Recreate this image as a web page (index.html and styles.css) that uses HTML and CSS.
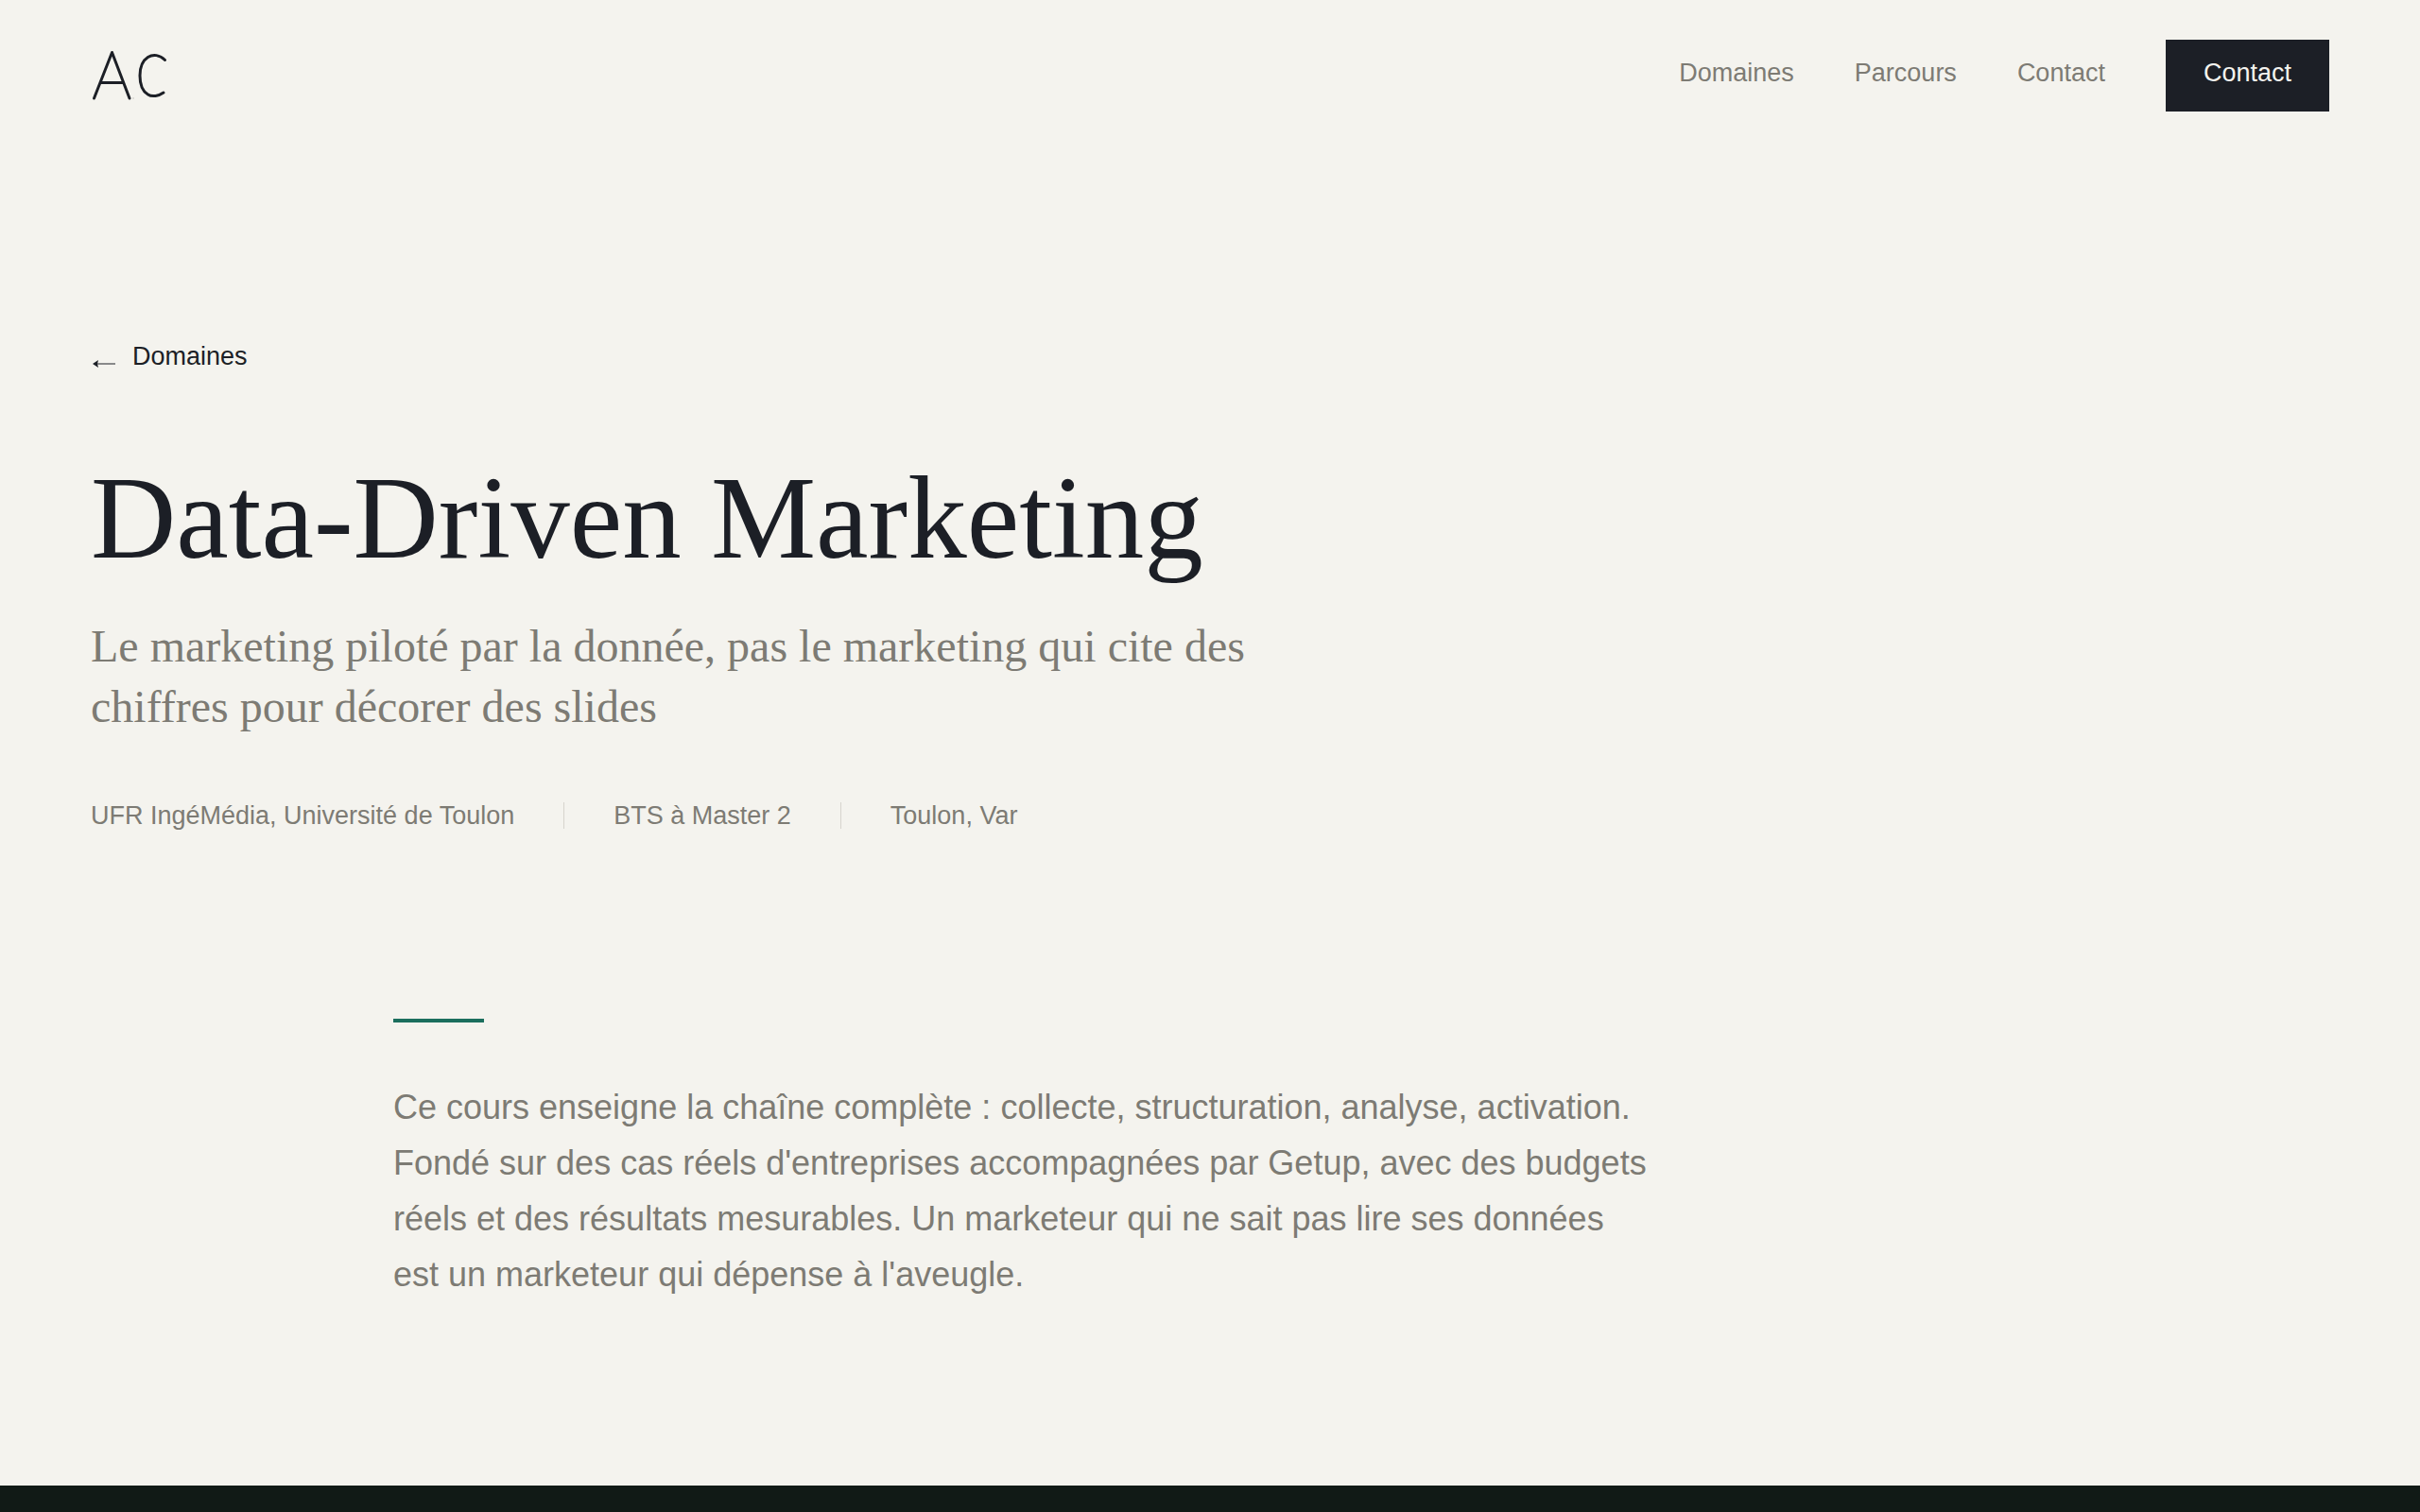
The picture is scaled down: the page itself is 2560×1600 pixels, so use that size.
FILE: index.html
```html
<!DOCTYPE html>
<html lang="fr">
<head>
<meta charset="utf-8">
<meta name="viewport" content="width=device-width, initial-scale=1">
<title>Data-Driven Marketing</title>
<link rel="stylesheet" href="styles.css">
</head>
<body>
<header class="site-header">
  <a class="logo" href="#" aria-label="AC">
    <svg width="84" height="60" viewBox="0 0 84 60" aria-hidden="true">
      <path d="M3.500 54 22.500 5.500 41 54M10.500 37.500H34"/>
      <path d="M78.500 13.500C73 8 66 7 60.500 10.500 53.500 15 52 22 52 30 52 39 54.500 46.500 60.500 50 65 53 72 51.500 77 48"/>
      <circle cx="45" cy="54" r="1"/>
    </svg>
  </a>
  <nav class="nav">
    <a class="nav-link" href="#domaines">Domaines</a>
    <a class="nav-link" href="#parcours">Parcours</a>
    <a class="nav-link" href="#contact">Contact</a>
    <a class="nav-button" href="#contact">Contact</a>
  </nav>
</header>
<main>
  <section class="hero">
    <a class="back" href="#domaines">
      <svg width="28" height="10" viewBox="0 0 28 10" aria-hidden="true">
        <path class="shaft" d="M5 5H26"/>
        <path class="head" d="M2 5 8 1 7 5 8 9Z"/>
      </svg>
      <span>Domaines</span>
    </a>
    <h1 class="title">Data-Driven Marketing</h1>
    <p class="subtitle">Le marketing piloté par la donnée, pas le marketing qui cite des chiffres pour décorer des slides</p>
    <ul class="meta">
      <li>UFR IngéMédia, Université de Toulon</li>
      <li>BTS à Master 2</li>
      <li>Toulon, Var</li>
    </ul>
  </section>
  <section class="intro">
    <p class="intro-text">Ce cours enseigne la chaîne complète : collecte, structuration, analyse, activation. Fondé sur des cas réels d'entreprises accompagnées par Getup, avec des budgets réels et des résultats mesurables. Un marketeur qui ne sait pas lire ses données est un marketeur qui dépense à l'aveugle.</p>
  </section>
  <section class="dark-band"></section>
</main>
</body>
</html>
```
FILE: styles.css
```css
* {
  box-sizing: border-box;
}

body {
  margin: 0;
  min-height: 100vh;
  display: flex;
  flex-direction: column;
  background: #f4f3ee;
  color: #1c1f26;
  font-family: "Liberation Sans", Arial, sans-serif;
  font-size: 27px;
  line-height: 40px;
}

a {
  color: inherit;
  text-decoration: none;
}

main {
  flex: 1;
  display: flex;
  flex-direction: column;
}

.site-header {
  display: flex;
  justify-content: space-between;
  align-items: center;
  padding: 42px 96px;
}

.logo svg {
  display: block;
  fill: none;
  stroke: #1c1f26;
  stroke-width: 3;
  stroke-linecap: round;
  stroke-linejoin: round;
}

.logo circle {
  fill: #d8d7d2;
  stroke: none;
}

.nav {
  display: flex;
  gap: 64px;
}

.nav-link,
.nav-button {
  padding: 15px 0 21px;
}

.nav-link {
  color: #7d7b74;
}

.nav-button {
  padding-left: 40px;
  padding-right: 40px;
  background: #1c1f26;
  color: #f4f3ee;
}

.hero {
  padding: 197px 96px 195px;
}

.back {
  display: flex;
  align-items: flex-end;
  gap: 16px;
  width: fit-content;
}

.back svg {
  margin-bottom: 7px;
}

.back .shaft {
  stroke: #1c1f26;
  stroke-opacity: 0.5;
  stroke-width: 2;
}

.back .head {
  fill: #1c1f26;
}

.title {
  margin: 81px 0 34px;
  font: 400 125px/140px "Liberation Serif", "Times New Roman", serif;
}

.subtitle {
  max-width: 1280px;
  margin: 0 0 63px;
  color: #7d7b74;
  font: 400 48px/64px "Liberation Serif", "Times New Roman", serif;
}

.meta {
  display: flex;
  align-items: center;
  gap: 52px;
  margin: 0;
  padding: 0;
  list-style: none;
  color: #7d7b74;
}

.meta li {
  display: flex;
  align-items: center;
  gap: 52px;
}

.meta li + li::before {
  content: "";
  width: 1px;
  height: 28px;
  background: #d6d4cd;
}

.intro {
  padding: 0 416px 194px;
}

.intro::before {
  content: "";
  display: block;
  width: 96px;
  height: 4px;
  margin-bottom: 60px;
  background: #1b6e5d;
}

.intro-text {
  max-width: 1336px;
  margin: 0;
  color: #7d7b74;
  font-size: 36px;
  line-height: 59px;
}

.dark-band {
  flex: 1;
  min-height: 28px;
  background: #111a16;
}
```
